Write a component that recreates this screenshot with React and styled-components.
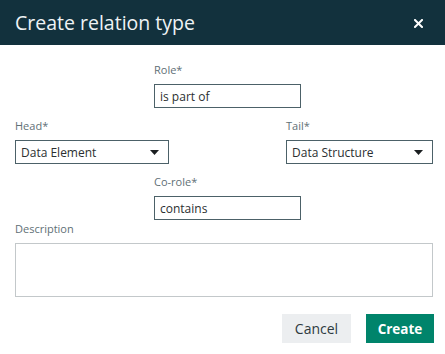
import React from 'react';
import styled, { createGlobalStyle } from 'styled-components';

const GlobalStyle = createGlobalStyle`
  html, body {
    margin: 0;
    padding: 0;
    background: #ffffff;
  }
  body {
    font-family: 'Open Sans', 'Liberation Sans', sans-serif;
  }
  * {
    box-sizing: border-box;
  }
`;

const Dialog = styled.div`
  width: 445px;
  height: 354px;
  background: #ffffff;
  display: flex;
  flex-direction: column;
`;

const Header = styled.div`
  height: 45px;
  background: #12313d;
  display: flex;
  align-items: center;
  justify-content: space-between;
  padding: 0 22px 0 15px;

  h2 {
    margin: 0;
    font-size: 19.5px;
    font-weight: 400;
    line-height: 45px;
    color: #eef3f5;
  }
`;

const CloseButton = styled.button`
  border: none;
  background: none;
  padding: 0;
  width: 10px;
  height: 10px;
  display: grid;
  place-items: center;
  cursor: pointer;
  margin-top: 2px;
`;

const Body = styled.div`
  padding: 17px 12px 0 15px;
  display: flex;
  flex-direction: column;
`;

const Row = styled.div`
  display: flex;
  justify-content: ${({ spread }) => (spread ? 'space-between' : 'flex-start')};
  padding-left: ${({ indent }) => indent || 0}px;
  margin-bottom: ${({ gap }) => gap || 0}px;
`;

const Field = styled.div`
  display: flex;
  flex-direction: column;
  width: ${({ width }) => (width ? `${width}px` : '100%')};
`;

const Label = styled.label`
  font-size: 11px;
  line-height: 16px;
  color: #5f7076;
  margin-bottom: 6px;
`;

const TextInput = styled.input`
  height: 24px;
  border: 1px solid #4c6168;
  padding: 0 5px;
  font-family: inherit;
  font-size: 12px;
  color: #2b2f31;
  outline: none;
`;

const SelectBox = styled.div`
  height: 24px;
  border: 1px solid #4c6168;
  padding: 0 9px 0 5px;
  display: flex;
  align-items: center;
  justify-content: space-between;
  font-size: 12px;
  color: #2b2f31;
  cursor: pointer;
`;

const TextArea = styled.textarea`
  height: 54px;
  border: 1px solid #c3c8ca;
  resize: none;
  font-family: inherit;
  font-size: 12px;
  padding: 4px 5px;
  outline: none;
`;

const Footer = styled.div`
  display: flex;
  justify-content: flex-end;
  gap: 15px;
  margin-top: 17px;
  padding-right: 11px;
`;

const Button = styled.button`
  height: 29px;
  width: ${({ w }) => w}px;
  border: none;
  font-family: inherit;
  font-size: ${({ primary }) => (primary ? '13.5px' : '14px')};
  font-weight: ${({ primary }) => (primary ? 700 : 400)};
  color: ${({ primary }) => (primary ? '#ffffff' : '#2e3a40')};
  background: ${({ primary }) => (primary ? '#00846b' : '#eceef0')};
  cursor: pointer;
`;

const Caret = () => (
  <svg width="9" height="5" viewBox="0 0 9 5">
    <polygon points="0,0 9,0 4.5,5" fill="#1b1f21" />
  </svg>
);

const Select = ({ value }) => (
  <SelectBox>
    <span>{value}</span>
    <Caret />
  </SelectBox>
);

export default function App() {
  return (
    <>
      <GlobalStyle />
      <Dialog>
        <Header>
          <h2>Create relation type</h2>
          <CloseButton aria-label="Close">
            <svg width="9" height="9" viewBox="0 0 9 9">
              <path
                d="M1 1 L8 8 M8 1 L1 8"
                stroke="#ffffff"
                strokeWidth="2"
                strokeLinecap="square"
              />
            </svg>
          </CloseButton>
        </Header>
        <Body>
          <Row indent={139} gap={10}>
            <Field width={147}>
              <Label>Role*</Label>
              <TextInput defaultValue="is part of" />
            </Field>
          </Row>
          <Row spread gap={10}>
            <Field width={154}>
              <Label>Head*</Label>
              <Select value="Data Element" />
            </Field>
            <Field width={147}>
              <Label>Tail*</Label>
              <Select value="Data Structure" />
            </Field>
          </Row>
          <Row indent={139} gap={1}>
            <Field width={147}>
              <Label>Co-role*</Label>
              <TextInput defaultValue="contains" />
            </Field>
          </Row>
          <Row>
            <Field>
              <Label>Description</Label>
              <TextArea />
            </Field>
          </Row>
        </Body>
        <Footer>
          <Button w={69}>Cancel</Button>
          <Button primary w={68}>Create</Button>
        </Footer>
      </Dialog>
    </>
  );
}
